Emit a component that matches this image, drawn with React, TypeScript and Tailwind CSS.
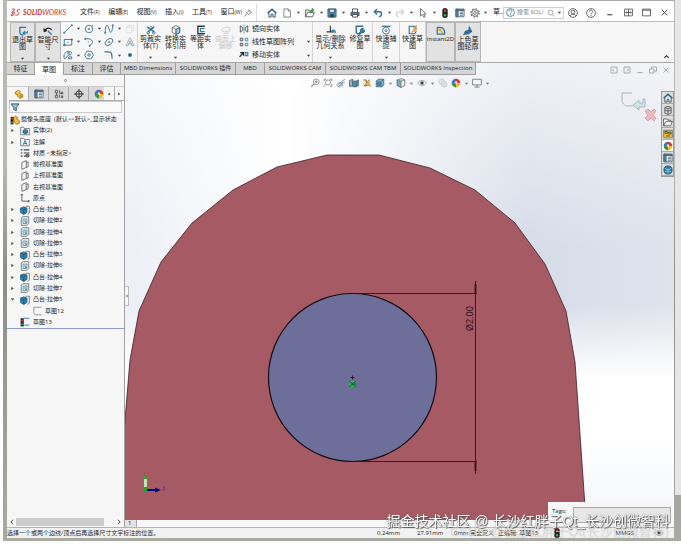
import { ReactNode } from "react";
import clsx from "clsx";

type SvgProps = { children: ReactNode; className?: string; stroke?: string };

const Svg = ({ children, className = "size-[10px]", stroke = "#356f8e" }: SvgProps) => (
  <svg viewBox="0 0 16 16" className={clsx("shrink-0", className)} fill="none" stroke={stroke} strokeWidth="1.4">
    {children}
  </svg>
);

const Caret = ({ className = "" }: { className?: string }) => (
  <svg viewBox="0 0 6 6" className={clsx("size-[5px] shrink-0", className)}>
    <path d="M1 2h4L3 4.500z" fill="#444" />
  </svg>
);

const icons: Record<string, ReactNode> = {
  home: (
    <Svg>
      <path d="M3 8v6.500h3.500V10h3v4.500H13V8" fill="#fff" stroke="#345" />
      <path d="M1 8.500L8 2l7 6.500" strokeWidth="2.400" stroke="#1f6186" />
    </Svg>
  ),
  doc: (
    <Svg stroke="#777">
      <path d="M3 1.500h7l3.500 3.500v9.500H3z M10 1.500V5h3.500" fill="#fff" />
    </Svg>
  ),
  open: (
    <Svg stroke="#555">
      <path d="M1 14V3h5l1.500 2H12v2" fill="#f5efd8" />
      <path d="M1 14L4.500 7H15l-3 7z" fill="#fff" />
      <path d="M8 8c0-4 2-5 5-5M11 .5L14 3l-3 2.500" stroke="#3a9a3f" strokeWidth="1.800" />
    </Svg>
  ),
  save: (
    <Svg stroke="#345d78">
      <path d="M1.500 1.500h13v13h-13z" fill="#5c8ba9" />
      <path d="M4 2h8v5H4z" fill="#dcebf3" />
      <path d="M5 10h6v4.500H5z" fill="#23394a" />
    </Svg>
  ),
  print: (
    <Svg stroke="#444">
      <path d="M4 7V1.500h8V7" fill="#fff" />
      <path d="M1.500 7h13v5h-13z" fill="#4d88ad" />
      <path d="M4 10.500h8v4H4z" fill="#fff" />
    </Svg>
  ),
  undo: (
    <Svg stroke="#2f6f9c">
      <path d="M3 6h7c5 0 5 7 0 8" strokeWidth="2.200" />
      <path d="M6.500 1.500L2 6l4.500 4.500" strokeWidth="2.200" />
    </Svg>
  ),
  redo: (
    <Svg stroke="#d2d2d2">
      <path d="M13 6H6c-5 0-5 7 0 8M9.500 1.500L14 6l-4.500 4.500" strokeWidth="2" />
    </Svg>
  ),
  cursor: (
    <Svg stroke="#666">
      <path d="M4 1v12l3-2.500L9.500 15l2-1L9 9.500h4z" fill="#fff" />
    </Svg>
  ),
  traffic: (
    <Svg stroke="#222">
      <rect x="4.500" y="1" width="7" height="14" rx="2" fill="#222" />
      <circle cx="8" cy="4.500" r="2" fill="#e33b2f" stroke="none" />
      <circle cx="8" cy="11.500" r="2" fill="#3da845" stroke="none" />
    </Svg>
  ),
  list: (
    <Svg stroke="#4a6478">
      <path d="M1.500 2h13v12h-13z" fill="#fff" />
      <path d="M1.500 2h13v2h-13zM1.500 2h3.500v12H1.500z" fill="#4c84a6" />
      <path d="M7.500 6.500H13M7.500 9H13M7.500 11.500H13" />
    </Svg>
  ),
  gear: (
    <Svg stroke="#666">
      <circle cx="8" cy="8" r="5.200" />
      <circle cx="8" cy="8" r="2.200" />
      <circle cx="8" cy="8" r="6.700" strokeDasharray="2.600 2.660" strokeWidth="1.800" />
    </Svg>
  ),
  exit: (
    <Svg>
      <path d="M13 2H3v8c0 2 1 4 4 4h2" strokeWidth="2" />
      <path d="M15 8v3H9m2.500-3L8 11l3.500 3" stroke="#2c83b5" strokeWidth="1.800" />
    </Svg>
  ),
  dimension: (
    <Svg stroke="#222">
      <path d="M2 9C4 3 9 2 14 6M2 9l-.5-5M2 9l4-2" strokeWidth="2" />
      <path d="M8 8l6 6" stroke="#2c83b5" strokeWidth="2.200" />
    </Svg>
  ),
  line: (
    <Svg>
      <path d="M2 14L14 2" />
      <path d="M1 13h2v2H1zM13 1h2v2h-2z" strokeWidth="1" />
    </Svg>
  ),
  circle: (
    <Svg>
      <circle cx="8" cy="8" r="6" />
      <path d="M8 6.500v3M6.500 8h3M13 3l1.500-1.500" />
    </Svg>
  ),
  spline: (
    <Svg>
      <path d="M2 14C2-2 6 0 8 8s5 8 6-6" />
      <path d="M1 13h2v2H1zM13 1h2v2h-2z" strokeWidth="1" />
    </Svg>
  ),
  box: (
    <Svg stroke="#ddd">
      <path d="M2 5h9v9H2zM5 5V2h9v9h-3" />
    </Svg>
  ),
  rect: (
    <Svg>
      <path d="M2 4h12v9H2zM7 8.500h2" />
      <path d="M1 12h2v2H1zM13 3h2v2h-2z" strokeWidth="1" fill="#27607f" />
    </Svg>
  ),
  arc: (
    <Svg>
      <path d="M2 3c12-2 15 6 7 11" />
      <path d="M1 2h2v2H1zM8 13h2v2H8zM6 7.500h2" strokeWidth="1" />
    </Svg>
  ),
  ellipse: (
    <Svg>
      <ellipse cx="8" cy="8" rx="7" ry="4.500" transform="rotate(-40 8 8)" />
      <path d="M8 6.500v3M6.500 8h3" />
    </Svg>
  ),
  textTool: (
    <Svg stroke="#8fa7b4">
      <path d="M2 14L7 2h2l5 12h-3L8 6l-3 8zM5 11h6" />
    </Svg>
  ),
  slot: (
    <Svg>
      <path d="M2 14c-2-7 2-12 8-12 6 1 4 6 0 6-4 0-4 6-8 6zM9 11h5v3H9z" />
      <circle cx="9" cy="5" r="1.500" />
    </Svg>
  ),
  polygon: (
    <Svg>
      <path d="M4.500 2h7L15 8l-3.500 6h-7L1 8z" />
      <circle cx="8" cy="8" r="2" />
    </Svg>
  ),
  fillet: (
    <Svg>
      <path d="M1 3h6c5 0 6 3 6 11" strokeWidth="1.800" />
    </Svg>
  ),
  point: (
    <Svg>
      <path d="M6 6h4v4H6z" fill="#27607f" />
    </Svg>
  ),
  trim: (
    <Svg>
      <path d="M2 3l11 8M13 3L3 11" strokeWidth="2.400" />
      <circle cx="3.500" cy="12.500" r="2" />
      <circle cx="12.500" cy="12.500" r="2" />
      <path d="M8 1v3" stroke="#2c83b5" strokeWidth="2" />
    </Svg>
  ),
  convert: (
    <Svg stroke="#666">
      <path d="M2 4l6-3 6 3v8l-6 3-6-3z" fill="#fff" />
      <path d="M2 4l6 3 6-3M8 7v8" />
      <path d="M8 7l6-3v8l-6 3z" fill="#a9cbdc" stroke="#27607f" />
    </Svg>
  ),
  offset: (
    <Svg>
      <path d="M14 2H3v12h11" strokeWidth="2.200" stroke="#333" />
      <path d="M14 5.500H7v5h7" stroke="#2c83b5" strokeWidth="1.800" />
    </Svg>
  ),
  surface: (
    <Svg stroke="#ccc">
      <path d="M1 9c4-8 9-5 14-5-2 7-7 9-14 5zM4 13c3 2 8 1 11-4" />
    </Svg>
  ),
  mirror: (
    <Svg stroke="#444">
      <path d="M2 3v10l4-3V6zM14 3v10l-4-3V6z" />
      <path d="M8 1v14" stroke="#2c83b5" strokeDasharray="2 1" />
    </Svg>
  ),
  pattern: (
    <Svg stroke="#444">
      <path d="M2 2h4v4H2zM2 10h4v4H2z" />
      <path d="M10 2h4v4h-4zM10 10h4v4h-4z" stroke="#2c83b5" />
    </Svg>
  ),
  move: (
    <Svg stroke="#222">
      <path d="M1 11l5-6M2 4h5v5" strokeWidth="2" />
      <path d="M10 4h4v5h-4z" stroke="#2c83b5" strokeWidth="2" />
    </Svg>
  ),
  relations: (
    <Svg stroke="#333">
      <path d="M7 1v10M1 11h12" strokeWidth="1.800" />
      <path d="M9 11c0-4 6-4 6 2" stroke="#2c83b5" strokeWidth="2" />
    </Svg>
  ),
  repair: (
    <Svg>
      <path d="M13 2H2v9c0 2 1 3 4 3" strokeWidth="2.200" />
      <path d="M6 14l3-4c-1-4 2-6 5-4l-2 2 2 2 1-2c1 4-2 5-4 4l-3 3z" fill="#2c83b5" stroke="#24516b" />
    </Svg>
  ),
  snap: (
    <Svg>
      <path d="M1 2h14" strokeWidth="2" />
      <circle cx="8" cy="9" r="5.500" />
      <circle cx="8" cy="9" r="1.500" />
    </Svg>
  ),
  rapid: (
    <Svg>
      <path d="M12 2H2v12h5c4 0 6-1 6-5" strokeWidth="1.800" />
      <path d="M14 1L8 5l3 1-5 6 9-6-3-1z" fill="#f4ad3d" stroke="#d7771f" strokeWidth="1" />
    </Svg>
  ),
  instant: (
    <Svg>
      <path d="M2 2v11h12M2 2h5c6 0 7 4 7 11" strokeWidth="2" />
      <path d="M5 5l6 6M5 5v3M5 5h3" stroke="#d8a826" strokeWidth="2" />
    </Svg>
  ),
  shaded: (
    <Svg>
      <path d="M1 14l3-6 5-1 1-6 4 8-4 3z" fill="#2d7ba6" />
      <path d="M4 8l5 5M9 7l5 2" stroke="#194a66" />
    </Svg>
  ),
  part: (
    <Svg stroke="#a87710">
      <path d="M2 5l5-3 3 2-1 3 5 2v4l-4 2-4-3-1-3-3-1z" fill="#f2bd3b" />
      <path d="M5 5l3-1" stroke="#fff0b8" />
      <circle cx="11" cy="11" r="1.500" fill="#fff" />
    </Svg>
  ),
  rootPart: (
    <Svg stroke="#a87710">
      <path d="M5 4l4-2 3 2-1 3 4 2v4l-4 2-4-3z" fill="#f2bd3b" />
      <path d="M1 3h4.500v12H1z" fill="#222" stroke="none" />
      <circle cx="3.200" cy="6" r="1.600" fill="#e0372c" stroke="none" />
      <circle cx="3.200" cy="12" r="1.600" fill="#3aa545" stroke="none" />
    </Svg>
  ),
  config: (
    <Svg stroke="#555">
      <path d="M2 2h4v4H2zM2 10h4v4H2zM9 2v5h3M12 5h2v3h-2zM9 9v5M12 11h2v3h-2zM4 6v4" />
    </Svg>
  ),
  target: (
    <Svg stroke="#222">
      <circle cx="8" cy="8" r="5" />
      <path d="M8 0v16M0 8h16" />
    </Svg>
  ),
  appearance: (
    <Svg stroke="none">
      <path d="M8 8V1a7 7 0 00-7 7z" fill="#3d6fd0" />
      <path d="M8 8h7a7 7 0 00-7-7z" fill="#d63a30" />
      <path d="M8 8v7a7 7 0 007-7z" fill="#e8c034" />
      <path d="M8 8H1a7 7 0 007 7z" fill="#35974a" />
      <circle cx="8" cy="7" r="2" fill="#fff" opacity=".8" />
    </Svg>
  ),
  filter: (
    <Svg stroke="#2a4656">
      <path d="M1.500 3h13L10 8.500V14l-4-2V8.500z" fill="#8cc3df" />
    </Svg>
  ),
  folder: (
    <Svg stroke="#777">
      <path d="M1 14V2h5l1 2h8v10z" fill="#f5f5f5" />
      <path d="M5 7l3.500-1.500L12 7v4l-3.500 1.500L5 11z" fill="#2c83b5" stroke="#1f5674" />
    </Svg>
  ),
  notes: (
    <Svg stroke="#777">
      <path d="M1 14V2h5l1 2h8v10z" fill="#f5f5f5" />
      <path d="M5 12.500l3.200-7 3.200 7M6 10.500h4.500" stroke="#2281b4" strokeWidth="1.600" />
    </Svg>
  ),
  material: (
    <Svg stroke="#444">
      <path d="M6 3h9M6 8h9M6 13h4M1 3h3M1 8h3M1 13h3" strokeWidth="1.800" />
      <circle cx="12" cy="12" r="2.500" fill="#777" />
    </Svg>
  ),
  plane: (
    <Svg stroke="#666">
      <path d="M3 4l7-3v11l-7 3zM10 4l3-1v8l-3 1" />
    </Svg>
  ),
  origin: (
    <Svg stroke="#555">
      <path d="M3 2v11h12M1.500 4L3 1.500 4.500 4M12.500 11.500L15 13l-2.500 1.500" />
    </Svg>
  ),
  boss: (
    <Svg stroke="#235672">
      <path d="M9 2h6v11l-3 2" stroke="#777" fill="#eee" />
      <path d="M1 5l5-2 5 2v7l-5 3-5-3z" fill="#2d86b2" />
      <path d="M1 5l5 2.500L11 5M6 7.500V15" />
    </Svg>
  ),
  cut: (
    <Svg stroke="#777">
      <path d="M2 3l3-2h9v11l-3 3H2z" fill="#e6ecef" />
      <path d="M5 5h6v7H5z" fill="#fff" stroke="#5a93ac" />
      <path d="M8 6v4h3" stroke="#27708f" />
    </Svg>
  ),
  sketch: (
    <Svg stroke="#888">
      <path d="M15 2H3v8c0 3 1 4 4 4h8" />
    </Svg>
  ),
  sketchEdit: (
    <Svg stroke="#27708f">
      <path d="M6 2h9M7 13h8" />
      <path d="M1 2h5v13H1z" fill="#222" stroke="none" />
      <circle cx="3.500" cy="5.500" r="1.700" fill="#e0372c" stroke="none" />
      <circle cx="3.500" cy="11.500" r="1.700" fill="#3aa545" stroke="none" />
    </Svg>
  ),
  zoomFit: (
    <Svg stroke="#888">
      <circle cx="10" cy="6" r="4.500" />
      <path d="M7 9l-5 5M8 6h4M10 4v4" strokeWidth="1.800" />
    </Svg>
  ),
  zoomArea: (
    <Svg stroke="#888">
      <circle cx="8" cy="7" r="4" />
      <path d="M5 10l-4 4M2 2h3M2 2v3M14 2h-3M14 2v3M14 13h-3M14 13v-3" strokeWidth="1.600" />
    </Svg>
  ),
  prevView: (
    <Svg stroke="#6f93a4">
      <path d="M14 2L6 8h8M1 11l4-4v2.500h5v3H5V15z" fill="#dbe9f0" />
    </Svg>
  ),
  section: (
    <Svg stroke="#4d6673">
      <path d="M1 4l5-2v10l-5 2z" fill="#9cb9c6" />
      <path d="M6 5h5l4-2v9l-4 2H6z" fill="#4d93b5" />
      <path d="M11 5v9" />
    </Svg>
  ),
  dynamic: (
    <Svg stroke="#8c7440">
      <path d="M12 2L3 13l8-2 3 3M2 3h5v5" fill="#f2bb4d" />
    </Svg>
  ),
  orient: (
    <Svg stroke="#396a80">
      <path d="M2 5l3-3h9v9l-3 3H2z" fill="#a8cddd" />
      <path d="M2 5h9v9M11 5l3-3" />
      <path d="M4 7h5v5H4z" fill="#4a91b4" />
    </Svg>
  ),
  display: (
    <Svg stroke="#777">
      <path d="M2 3l6-2 6 2v9l-6 3-6-3z" fill="#eef4f6" />
      <path d="M2 3l6 2v10l-6-3z" fill="#72acc5" />
      <path d="M8 5l6-2" />
    </Svg>
  ),
  eye: (
    <Svg stroke="#999">
      <path d="M1 8c4-5 10-5 14 0-4 5-10 5-14 0z" fill="#fff" />
      <circle cx="8" cy="8" r="2.700" fill="#34464f" />
    </Svg>
  ),
  ball: (
    <Svg stroke="#ccc">
      <circle cx="6" cy="6" r="4.500" fill="#e3e3e3" />
      <circle cx="10" cy="10" r="4.500" fill="#ddd" />
    </Svg>
  ),
  monitor: (
    <Svg stroke="#777">
      <path d="M1 2h14v9H1zM8 11v3M4 14.500h8" fill="#f3f5f8" />
    </Svg>
  ),
  cube: (
    <Svg stroke="#555">
      <path d="M3 4l5-2 5 2v9l-5 2-5-2zM3 4l5 2 5-2M8 6v9M3 8l5 2 5-2" fill="#ddd" />
    </Svg>
  ),
  openFolder: (
    <Svg stroke="#555">
      <path d="M1 14V3h5l1.500 2H12v2M1 14l3.500-7H15l-3 7z" fill="#fff" />
    </Svg>
  ),
  palette: (
    <Svg stroke="#777">
      <path d="M1 2h14v12H1z" fill="#e5bf3d" />
      <path d="M3 4h4v3H3zM9 5h4v3H9zM5 11h6" stroke="#4f4a32" />
    </Svg>
  ),
  globe: (
    <Svg stroke="#174b66">
      <circle cx="8" cy="8" r="6.500" fill="#2e7ea6" />
      <path d="M3 5c3 3 7 3 10 0M3 11c3-2 7-2 10 0M8 9v5" stroke="#9bd0e6" />
    </Svg>
  ),
};

const menus = [
  ["文件", "(F)"],
  ["编辑", "(E)"],
  ["视图", "(V)"],
  ["插入", "(I)"],
  ["工具", "(T)"],
  ["窗口", "(W)"],
];

const quickTools = ["doc", "open", "save", "print", "undo", "redo", "cursor"];

const sketchTools = ["line", "circle", "spline", "box", "rect", "arc", "ellipse", "textTool", "slot", "polygon", "fillet", "point"];

const tabs = [
  { label: "特征", width: "w-[28px]", cjk: true },
  { label: "草图", width: "w-[29px]", cjk: true, active: true },
  { label: "标注", width: "w-[29px]", cjk: true },
  { label: "评估", width: "w-[28px]", cjk: true },
  { label: "MBD Dimensions", width: "w-[55px]" },
  { label: "SOLIDWORKS 插件", width: "w-[60px]" },
  { label: "MBD", width: "w-[29px]" },
  { label: "SOLIDWORKS CAM", width: "w-[61px]" },
  { label: "SOLIDWORKS CAM TBM", width: "w-[75px]" },
  { label: "SOLIDWORKS Inspection", width: "w-[75px]" },
];

const tree = [
  { icon: "folder", label: "实体(2)", arrow: true },
  { icon: "notes", label: "注解", arrow: true },
  { icon: "material", label: "材质 <未指定>" },
  { icon: "plane", label: "前视基准面" },
  { icon: "plane", label: "上视基准面" },
  { icon: "plane", label: "右视基准面" },
  { icon: "origin", label: "原点" },
  { icon: "boss", label: "凸台-拉伸1", arrow: true },
  { icon: "cut", label: "切除-拉伸2", arrow: true },
  { icon: "cut", label: "切除-拉伸4", arrow: true },
  { icon: "cut", label: "切除-拉伸5", arrow: true },
  { icon: "boss", label: "凸台-拉伸3", arrow: true },
  { icon: "cut", label: "切除-拉伸6", arrow: true },
  { icon: "boss", label: "凸台-拉伸4", arrow: true },
  { icon: "cut", label: "切除-拉伸7", arrow: true },
  { icon: "boss", label: "凸台-拉伸5", arrow: true, open: true },
  { icon: "sketch", label: "草图12", child: true },
  { icon: "sketchEdit", label: "草图13" },
];

const viewTools = [
  { icon: "zoomFit" },
  { icon: "zoomArea" },
  { icon: "prevView" },
  { icon: "section" },
  { icon: "dynamic" },
  { icon: "orient", caret: true },
  { icon: "display", caret: true },
  { icon: "eye", caret: true },
  { icon: "ball" },
  { icon: "appearance", caret: true },
  { icon: "monitor", caret: true },
];

const taskPane = ["home", "cube", "openFolder", "palette", "appearance", "list", "globe"];

type BigToolProps = { icon: string; lines: string[]; width: string; caret?: boolean; pressed?: boolean; disabled?: boolean; divider?: boolean };

const BigTool = ({ icon, lines, width, caret, pressed, disabled, divider }: BigToolProps) => (
  <button
    disabled={disabled}
    className={clsx(
      "flex shrink-0 flex-col items-center pt-[3px] text-[7px] leading-[7px]",
      width,
      pressed && "border border-[#b5b5b5] bg-[#e2e2e2]",
      divider && "border-r border-[#d5d5d5]",
      disabled && "text-[#c8c8c8]",
    )}
  >
    {icons[icon]}
    {lines.map((line) => (
      <span key={line} className="whitespace-nowrap">{line}</span>
    ))}
    {caret && <Caret className="mt-[6px]" />}
  </button>
);

const TitleBar = () => (
  <header className="flex h-[18px] items-center border-b border-[#bdbdbd] bg-white">
    <div className="flex w-[70px] shrink-0 items-center gap-[2px] pl-[3px] font-[Lato] text-[7px] text-[#d62b2b] italic">
      <svg viewBox="0 0 20 16" className="h-[9px] w-[11px]" fill="none" stroke="#d62b2b" strokeWidth="1.800">
        <path d="M4 2c4-1 6 0 3 3L3 8M2 14l4-7c4 0 4 5-4 7zM18 3c-4-1-7 1-4 4s2 6-4 6" />
      </svg>
      <span><b>SOLID</b>WORKS</span>
    </div>
    <nav className="flex w-[165px] shrink-0 justify-between pl-[3px] text-[7px]">
      {menus.map(([label, key]) => (
        <button key={label} className="whitespace-nowrap">
          {label}<span className="text-[5px]">{key}</span>
        </button>
      ))}
    </nav>
    <button aria-label="固定" className="flex h-full w-[15px] shrink-0 items-center justify-end border-r border-[#ddd] pr-[4px]">
      <Svg className="size-[8px]" stroke="#888">
        <path d="M1 15l5-5M4 6l6 6M6 7l4-4 4 4-4 4M9 1l6 6" strokeWidth="2" />
      </Svg>
    </button>
    <button aria-label="主页" className="ml-[10px] shrink-0">{icons.home}</button>
    <div className="ml-[5px] flex w-[155px] shrink-0 justify-between">
      {quickTools.map((tool) => (
        <button key={tool} aria-label={tool} className="flex items-center gap-[4px]">
          {icons[tool]}
          <Caret />
        </button>
      ))}
    </div>
    <div className="flex w-[66px] shrink-0 items-center gap-[5px] pl-[3px]">
      <button aria-label="重建">{icons.traffic}</button>
      <button aria-label="属性">{icons.list}</button>
      <button aria-label="选项" className="flex items-center gap-[3px]">{icons.gear}<Caret /></button>
      <span className="-mr-2 text-[7px]">草..</span>
    </div>
    <label className="flex h-3 w-[61px] shrink-0 items-center border border-[#d0d0d0] pl-[2px]">
      <Svg className="size-[9px]" stroke="#2b7096">
        <circle cx="8" cy="8" r="7" />
        <path d="M5.500 6c0-4 5-3 5 0 0 1.500-2.500 2-2.500 4M8 11v2" />
      </Svg>
      <input aria-label="搜索" placeholder="搜索 SOLI" className="ml-[2px] w-[30px] min-w-0 text-[6px] outline-none placeholder:text-[#777]" />
      <Svg className="size-[8px]" stroke="#888">
        <circle cx="7" cy="7" r="5" />
        <path d="M11 11l4 4" />
      </Svg>
      <Caret className="ml-[2px]" />
    </label>
    <div className="grid flex-1 grid-cols-6 place-items-center">
      <button aria-label="登录">
        <Svg stroke="#555">
          <circle cx="8" cy="8" r="7" />
          <circle cx="8" cy="6.500" r="3" />
          <path d="M3 13c2-4 8-4 10 0" />
        </Svg>
      </button>
      <button aria-label="帮助">
        <Svg stroke="#555">
          <circle cx="8" cy="8" r="7" />
          <path d="M5.500 6c0-4 5-3 5 0 0 1.500-2.500 2-2.500 4M8 11v2" />
        </Svg>
      </button>
      <button aria-label="最小化">
        <Svg className="size-[9px]" stroke="#444"><path d="M4 12h9" strokeWidth="2" /></Svg>
      </button>
      <button aria-label="排列">
        <Svg className="size-[9px]" stroke="#444"><path d="M1 2h14v12H1zM8 2v12M3 8h10M5 6L3 8l2 2M11 6l2 2-2 2" /></Svg>
      </button>
      <button aria-label="最大化">
        <Svg className="size-[9px]" stroke="#444"><path d="M1 2h14v12H1zM1 4h14" /></Svg>
      </button>
      <button aria-label="关闭">
        <Svg className="size-[9px]" stroke="#333"><path d="M3 3l10 10M13 3L3 13" strokeWidth="1.600" /></Svg>
      </button>
    </div>
  </header>
);

const Ribbon = () => (
  <div className="flex h-[41px] border-b border-[#a9a9a9] bg-[#f6f6f6] pl-[3px]">
    <BigTool icon="exit" lines={["退出草", "图"]} width="w-[25px]" pressed caret />
    <BigTool icon="dimension" lines={["智能尺", "寸"]} width="w-[26px]" pressed caret />
    <div className="grid w-[77px] shrink-0 grid-cols-[21px_20px_21px_12px] grid-rows-3 items-center border-r border-[#d5d5d5] pl-[2px]">
      {sketchTools.map((tool, i) => (
        <button key={tool} aria-label={tool} className="flex items-center gap-[3px]">
          {icons[tool]}
          {i % 4 !== 3 && tool !== "polygon" && <Caret />}
        </button>
      ))}
    </div>
    <BigTool icon="trim" lines={["剪裁实", "体(T)"]} width="w-[25px]" caret />
    <BigTool icon="convert" lines={["转换实", "体引用"]} width="w-[25px]" caret />
    <BigTool icon="offset" lines={["等距实", "体"]} width="w-[25px]" />
    <BigTool icon="surface" lines={["曲面上", "偏移"]} width="w-[25px]" disabled />
    <div className="flex w-[75px] shrink-0 flex-col justify-around border-r border-[#d5d5d5] text-[7px] leading-3">
      {[["mirror", "镜向实体"], ["pattern", "线性草图阵列"], ["move", "移动实体"]].map(([icon, label], i) => (
        <button key={label} className="flex items-center gap-[3px] pl-[1px] whitespace-nowrap">
          {icons[icon]}
          <span>{label}</span>
          {i > 0 && <Caret className="mr-[1px] ml-auto" />}
        </button>
      ))}
    </div>
    <BigTool icon="relations" lines={["显示/删除", "几何关系"]} width="w-[35px]" caret />
    <BigTool icon="repair" lines={["修复草", "图"]} width="w-[25px]" divider />
    <BigTool icon="snap" lines={["快速捕", "捉"]} width="w-[27px]" caret divider />
    <BigTool icon="rapid" lines={["快速草", "图"]} width="w-[26px]" divider />
    <button className="flex w-[29px] shrink-0 flex-col items-center border border-[#b5b5b5] bg-[#e2e2e2] pt-[3px] text-[6px] leading-[7px]">
      {icons.instant}
      Instant2D
    </button>
    <BigTool icon="shaded" lines={["上色草", "图轮廓"]} width="w-[26px]" pressed />
    <button aria-label="折叠" className="mt-auto mr-[4px] mb-[2px] ml-auto">
      <Svg className="size-[7px]" stroke="#222"><path d="M3 11l5-5 5 5" strokeWidth="2.400" /></Svg>
    </button>
  </div>
);

const FeatureTree = () => (
  <aside className="flex w-[118px] shrink-0 flex-col border-r border-[#a0a0a0] bg-[#f6f6f6]">
    <div className="flex h-3 items-center justify-center border-b border-[#ccc]">
      <span className="size-[3px] rounded-full border border-[#888]" />
    </div>
    <div className="ml-[2px] flex h-[14px] border-b border-[#aaa] bg-[#d9d9d9]">
      {["part", "list", "config", "target"].map((icon, i) => (
        <button key={icon} aria-label={icon} className={clsx("flex w-5 items-center justify-center border-r border-[#aaa]", i === 0 && "bg-[#f6f6f6]")}>
          {icons[icon]}
        </button>
      ))}
      <button aria-label="外观" className="flex w-[15px] items-center justify-end">{icons.appearance}</button>
      <button aria-label="上一页" className="flex flex-1 items-center justify-center border-r border-[#aaa] bg-[#f6f6f6]">
        <svg viewBox="0 0 6 6" className="size-[4px]"><path d="M4 1v4L1.500 3z" /></svg>
      </button>
      <button aria-label="下一页" className="flex flex-1 items-center justify-center bg-[#f6f6f6]">
        <svg viewBox="0 0 6 6" className="size-[4px]"><path d="M2 1v4L4.500 3z" /></svg>
      </button>
    </div>
    <label className="mx-[2px] flex h-3 items-center border border-[#ccc] bg-[#fafafa]">
      {icons.filter}
      <input aria-label="过滤" className="w-full min-w-0 text-[6px] outline-none" />
    </label>
    <ul className="flex h-[216px] flex-col justify-between border-b border-[#8f9bc9] pt-[1px] text-[6px] leading-[11px]">
      <li className="flex items-center overflow-hidden whitespace-nowrap">
        <span className="flex w-[13px] shrink-0 justify-end">{icons.rootPart}</span>
        <span className="pl-[1px]">摄像头底座&nbsp; (默认&lt;&lt;默认&gt;_显示状态</span>
      </li>
      {tree.map((node) => (
        <li key={node.label} className="flex h-[11px] items-center whitespace-nowrap">
          <span className={clsx("flex shrink-0 pl-[3px]", node.child ? "w-[25px]" : "w-[13px]")}>
            {node.arrow && (
              <svg viewBox="0 0 6 6" className="size-[5px]">
                <path d={node.open ? "M1 1.500h4L3 4.500z" : "M1.500 1v4L4.500 3z"} fill="#555" />
              </svg>
            )}
          </span>
          <span className="flex w-3 shrink-0 items-center">{icons[node.icon]}</span>
          <span className="pl-[1px]">{node.label}</span>
        </li>
      ))}
    </ul>
    <div className="mt-auto flex h-[11px] items-center justify-between px-[2px]">
      <Svg className="size-[6px]" stroke="#333"><path d="M11 2L5 8l6 6" strokeWidth="2.500" /></Svg>
      <span className="mr-3 ml-[1px] h-[8px] flex-1 bg-[#cdcdcd]" />
      <Svg className="size-[6px]" stroke="#333"><path d="M5 2l6 6-6 6" strokeWidth="2.500" /></Svg>
    </div>
  </aside>
);

const Model = () => (
  <svg viewBox="125 75 549 445" preserveAspectRatio="xMinYMin slice" className="absolute inset-0 size-full">
    <path
      d="M124 521V432L130 360L139 311L161 262L192 223L233 190L277 167L327 155H379L430 168L475 190L515 223L545 264L566 311L575 362L586 521z"
      fill="#a65a63"
      stroke="#3d1e24"
      strokeWidth=".8"
    />
    <circle cx="352.500" cy="377.500" r="84" fill="#6d6f9a" stroke="#120b12" strokeWidth="1.200" />
    <g stroke="#2a1519" strokeWidth=".9">
      <path d="M353 293.500H477M353 461.500H477M475.500 281V474" />
      <path d="M475.500 284v9M475.500 462v9" strokeWidth="1.800" />
      <path d="M350.500 377.500h4M352.500 375.500v4" />
    </g>
    <path d="M349 381h7v6h-7z" fill="#22b84a" />
    <path d="M349 381l7 6M356 381l-7 6M352 384h4" stroke="#0e5c2c" />
    <text transform="translate(473 331) rotate(-90)" fontFamily="Open Sans" fontSize="9" fill="#1d0e11">Ø2.00</text>
    <path d="M145.500 490v-13" stroke="#bfe8ae" strokeWidth="3" />
    <path d="M143.500 479l2-5 2 5zM144 487h3v4h-3z" fill="#1da824" />
    <path d="M147 490h9" stroke="#06067f" strokeWidth="2" />
    <path d="M155 487.500l6 2.500-6 2.500z" fill="#06067f" />
    <path d="M144.500 469l1 1.500 1-1.500M145.500 470.500v1.500" stroke="#3c9820" strokeWidth=".8" fill="none" />
    <path d="M163 487h2l-2 3h2" stroke="#6028b8" strokeWidth=".8" fill="none" />
  </svg>
);

const Viewport = () => (
  <main className="relative flex min-w-0 flex-1 flex-col">
    <div className="relative flex flex-1 flex-col overflow-hidden">
      <Model />
      <div className="relative flex h-4 items-center pl-[185px]">
        {viewTools.map((tool) => (
          <button key={tool.icon} aria-label={tool.icon} className="flex items-center">
            <span className="w-[13px]">{icons[tool.icon]}</span>
            {tool.caret && <Caret className="mr-[3px] opacity-70" />}
          </button>
        ))}
      </div>
      <div className="relative flex flex-1 justify-end">
        <svg viewBox="0 0 36 30" className="mt-[1px] mr-[4px] h-[30px] w-9" fill="none">
          <path d="M11 1H1v6c0 4 2 7 6 7h5" stroke="#a9b7bd" />
          <path d="M22 7v4h-4V8l-6 5 6 5v-3h6V7z" fill="#d2e3e6" stroke="#a3bcc1" />
          <path d="M24 19l3-2 3 3 3-3 2 2-3 4 3 3-2 3-3-3-3 3-3-3 3-3z" fill="#edb9c1" stroke="#dda1ab" />
        </svg>
        <div className="flex h-[86px] w-[13px] flex-col border border-[#999] bg-[#dcdcdc]">
          {taskPane.map((item) => (
            <button key={item} aria-label={item} className={clsx("flex flex-1 items-center justify-center border-b border-[#aaa]", item === "appearance" && "bg-white")}>
              {icons[item]}
            </button>
          ))}
        </div>
      </div>
    </div>
    <button aria-label="收起面板" className="absolute top-[211px] left-0 flex h-5 w-[4px] items-center justify-center border border-l-0 border-[#bbb] bg-[#f6f6f6]">
      <span className="size-[2px] rounded-full bg-[#888]" />
    </button>
    <div className="flex h-[7px] bg-[#f7f7f7]">
      <span className="w-3 border-r border-[#aaa] bg-[#e2e2e2] pl-[3px] text-[6px] leading-[7px]">1</span>
    </div>
    <div className="absolute right-0 bottom-0 flex h-[25px] w-[126px] items-start gap-[7px] bg-[#f7f7f7] py-[5px] pr-[3px] pl-[4px]">
      <label htmlFor="tags" className="text-[6px] leading-[8px]">Tags:</label>
      <textarea id="tags" className="h-[16px] min-w-0 flex-1 resize-none border border-[#aaa] bg-[#e6e6e6]" />
    </div>
  </main>
);

export default function App() {
  return (
    <div className="flex min-h-screen flex-col bg-white font-['Open_Sans','Noto_Sans_CJK_SC',sans-serif] text-[#222]">
      <div className="relative flex h-[541px] flex-col bg-linear-to-b from-[#b9b9b5] from-30% via-[#8e8f88] to-[#a9aaa2] pr-[7px] pl-[7px]">
        <div className="absolute inset-y-0 left-0 w-[3px] bg-white" />
        <div className="absolute top-0 right-0 h-[495px] w-[6px] bg-[#e6e6e6]" />
        <div className="flex flex-1 flex-col border-t border-[#aaa] bg-white pt-[3px]">
          <TitleBar />
          <Ribbon />
          <div className="flex flex-1 flex-col bg-[linear-gradient(to_bottom,rgba(255,255,255,0.6)_0%,rgba(255,255,255,0)_40%,rgba(255,255,255,0)_52%,#ffffff_68%,#ffffff_80%,#f3f5fa_100%),linear-gradient(to_right,#eceff6_18%,#ffffff_42%,#d6dce8_78%,#dfe3ec_100%)]">
            <div className="flex h-3 items-stretch justify-between">
              <div className="flex text-[6px] leading-[11px]" role="tablist">
                {tabs.map((tab) => (
                  <button
                    key={tab.label}
                    role="tab"
                    aria-selected={!!tab.active}
                    className={clsx(
                      "shrink-0 border-r border-b border-[#9d9d9d] whitespace-nowrap",
                      tab.width,
                      tab.cjk && "text-[7px]",
                      tab.active ? "border-b-0 bg-white" : "bg-[#d6d6d6]",
                    )}
                  >
                    {tab.label}
                  </button>
                ))}
              </div>
              <div className="flex items-center gap-[5px] pt-[2px] pr-[4px]">
                {["M2 2h12v12H2zM8 5L5 8l3 3", "M2 2h12v12H2zM8 5l3 3-3 3", "M3 13h10", "M1 6h9v8H1zM5 6V2h10v8h-5", "M3 3l10 10M13 3L3 13"].map((d) => (
                  <Svg key={d} className="size-[8px]" stroke="#999"><path d={d} strokeWidth="1.600" /></Svg>
                ))}
              </div>
            </div>
            <div className="flex flex-1">
              <FeatureTree />
              <Viewport />
            </div>
          </div>
          <footer className="flex h-[11px] items-center border-t border-[#b5b5b5] bg-[#f2f2f2] text-[6px] leading-[10px] whitespace-nowrap">
            <span className="w-[370px]">选择一个或两个边线/顶点后再选择尺寸文字标注的位置。</span>
            <span className="w-10">0.24mm</span>
            <span className="w-[37px]">27.91mm</span>
            <span className="w-[44px]">0mm 完全定义</span>
            <span className="w-[54px]">正编辑: 草图13</span>
            {icons.traffic}
            <span className="ml-auto pr-[20px]">MMGS</span>
            <span className="pr-[10px]">{icons.eye}</span>
          </footer>
        </div>
        <div className="h-[3px]" />
        <p className="pointer-events-none absolute right-[12px] bottom-[13px] font-['Liberation_Sans','Noto_Sans_CJK_SC',sans-serif] text-[14px] leading-[14px] whitespace-nowrap text-white [text-shadow:0_0_1px_#444,1px_1px_1px_#555]">
          掘金技术社区 @ 长沙红胖子Qt_长沙创微智科
        </p>
        <p className="pointer-events-none absolute right-[12px] bottom-[3px] font-['Liberation_Sans','Noto_Sans_CJK_SC',sans-serif] text-[13px] leading-[13px] whitespace-nowrap text-white/40 [text-shadow:0_0_1px_#8888]">
          CSDN @长沙红胖子Qt(长沙创微智科)
        </p>
      </div>
    </div>
  );
}
